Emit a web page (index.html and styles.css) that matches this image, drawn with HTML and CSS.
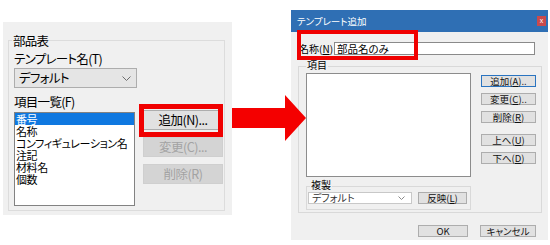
FILE: index.html
```html
<!DOCTYPE html>
<html>

<head>
    <meta name="viewport" content="width=device-width, initial-scale=1" />
    <link rel="stylesheet" href="styles.css">
</head>

<body>
    <div class="scene">
        <section class="panel">
            <div class="group">
                <span class="group-title">部品表</span>
                <div class="field-label">テンプレート名(T)</div>
                <div class="combo">
                    <span>デフォルト</span>
                    <svg class="chev" width="9" height="5" viewBox="0 0 9 5"><polyline points="0.5,0.5 4.5,4.5 8.5,0.5" fill="none" stroke="#6d6d6d" stroke-width="1"/></svg>
                </div>
                <div class="field-label list-label">項目一覧(F)</div>
                <div class="list-row">
                    <ul class="list">
                        <li class="selected">番号</li>
                        <li>名称</li>
                        <li>コンフィギュレーション名</li>
                        <li>注記</li>
                        <li>材料名</li>
                        <li>個数</li>
                    </ul>
                    <div class="btn-col">
                        <button class="btn">追加(N)...</button>
                        <button class="btn" disabled>変更(C)...</button>
                        <button class="btn" disabled>削除(R)</button>
                        <span class="mark mark-add"></span>
                    </div>
                </div>
            </div>
        </section>

        <svg class="arrow" width="74" height="48" viewBox="0 0 74 48">
            <polygon points="0,14 53,14 53,1 74,24 53,47 53,34 0,34" fill="#f40000"/>
        </svg>

        <section class="dialog">
            <div class="titlebar">
                <span>テンプレート追加</span>
                <span class="close">x</span>
            </div>
            <div class="name-row">
                <label class="name-label" for="tplname">名称(<u>N</u>)</label>
                <input id="tplname" class="name-input" type="text" value="部品名のみ">
            </div>
            <div class="dgroup">
                <span class="dgroup-title">項目</span>
                <div class="drow">
                    <div class="dlist"></div>
                    <div class="dbtn-col">
                        <button class="dbtn default">追加(<u>A</u>)..</button>
                        <button class="dbtn">変更(<u>C</u>)..</button>
                        <button class="dbtn">削除(<u>R</u>)</button>
                        <button class="dbtn spaced">上へ(<u>U</u>)</button>
                        <button class="dbtn">下へ(<u>D</u>)</button>
                    </div>
                </div>
                <div class="copy-group">
                    <span class="dgroup-title copy-title">複製</span>
                    <div class="copy-row">
                        <div class="dcombo">
                            <span>デフォルト</span>
                            <svg width="7" height="4" viewBox="0 0 7 4"><polyline points="0.5,0.5 3.5,3.5 6.5,0.5" fill="none" stroke="#8a8a8a" stroke-width="1"/></svg>
                        </div>
                        <button class="dbtn apply">反映(<u>L</u>)</button>
                    </div>
                </div>
            </div>
            <div class="footer">
                <button class="dbtn ok">OK</button>
                <button class="dbtn cancel">キャンセル</button>
            </div>
            <span class="mark mark-name"></span>
        </section>
    </div>
</body>

</html>
```

FILE: styles.css
```css
body {
    margin: 0;
    width: 550px;
    height: 245px;
    overflow: hidden;
    background-color: #fff;
    font-family: "Noto Sans CJK JP", "Noto Sans", sans-serif;
    font-feature-settings: "palt";
    color: #000;
}

.scene {
    display: flex;
    align-items: flex-start;
}

/* left: the property panel */
.panel {
    margin: 22px 0 0 3px;
    width: 229px;
    height: 193px;
    box-sizing: border-box;
    padding: 18px 7px 0 5px;
    background-color: #f0f0f0;
    font-size: 12.5px;
    letter-spacing: -0.7px;
}

.group {
    height: 171px;
    box-sizing: border-box;
    border: 1px solid #dcdcdc;
    padding-left: 5px;
}

.group-title {
    display: block;
    width: max-content;
    margin: -7px 0 0 -2px;
    padding: 0 1px;
    line-height: 14px;
    background-color: #f0f0f0;
}

.field-label {
    margin-top: 3px;
    line-height: 16px;
}

.combo {
    margin-top: 1px;
    width: 123px;
    height: 20px;
    box-sizing: border-box;
    border: 1px solid #adadad;
    background-color: #e5e5e5;
    display: flex;
    align-items: center;
    justify-content: space-between;
    padding: 0 5px 0 4px;
    line-height: 18px;
}

.list-label {
    margin-top: 6px;
}

.list-row {
    margin-top: -6px;
    display: flex;
    align-items: flex-start;
}

.list {
    margin: 8px 0 0;
    padding: 0;
    list-style: none;
    width: 121px;
    height: 94px;
    box-sizing: border-box;
    border: 1px solid #828282;
    background-color: #fff;
    font-size: 11px;
    line-height: 12px;
    letter-spacing: -0.4px;
}

.list li {
    height: 12px;
    padding-left: 1px;
    white-space: nowrap;
}

.list .selected {
    background-color: #0f78e0;
    color: #fff;
}

.btn-col {
    position: relative;
    margin: 6px 0 0 8px;
    display: flex;
    flex-direction: column;
    gap: 7px;
}

.btn {
    width: 80px;
    height: 20px;
    padding: 0;
    border: 1px solid #adadad;
    background-color: #e1e1e1;
    font-family: inherit;
    font-feature-settings: "palt";
    font-size: 12.5px;
    letter-spacing: -0.5px;
    line-height: 18px;
    color: #000;
}

.btn:disabled {
    border-color: #cfcfcf;
    background-color: #d4d4d4;
    color: #a3a3a3;
}

/* red annotation frames drawn over the screenshot */
.mark {
    position: absolute;
    box-sizing: border-box;
    border: 5px solid #f00000;
}

.mark-add {
    left: -4px;
    top: -6px;
    width: 84px;
    height: 33px;
}

.mark-name {
    left: 6px;
    top: 20px;
    width: 121px;
    height: 30px;
    border-width: 4px;
}

.arrow {
    position: relative;
    z-index: 1;
    margin-top: 94px;
    flex: none;
}

/* right: the dialog */
.dialog {
    position: relative;
    margin: 10px 0 0 -15px;
    width: 257px;
    height: 230px;
    background-color: #f0f0f0;
    font-size: 10px;
}

.titlebar {
    height: 22px;
    background-color: #2f6fb4;
    color: #fff;
    display: flex;
    align-items: center;
    justify-content: space-between;
    padding: 0 2px 0 6px;
    font-size: 9.5px;
}

.close {
    width: 9px;
    height: 10px;
    background-color: #c94a4c;
    font-size: 7px;
    line-height: 9px;
    text-align: center;
}

.name-row {
    margin: 10px 0 0 8px;
    display: flex;
    align-items: center;
}

.name-label {
    width: 35px;
    line-height: 13px;
}

.name-input {
    width: 201px;
    height: 13px;
    box-sizing: border-box;
    margin: 0;
    padding: 0 2px;
    border: 1px solid #8a8a8a;
    background-color: #fff;
    font-family: inherit;
    font-feature-settings: "palt";
    font-size: 10.5px;
    line-height: 11px;
    color: #000;
}

.dgroup {
    margin: 11px 0 0 7px;
    width: 244px;
    height: 147px;
    box-sizing: border-box;
    border: 1px solid #d9d9d9;
    padding-left: 7px;
}

.dgroup-title {
    display: block;
    width: max-content;
    margin-top: -7px;
    padding: 0 1px;
    line-height: 10px;
    background-color: #f0f0f0;
}

.drow {
    margin-top: 3px;
    display: flex;
    align-items: flex-start;
}

.dlist {
    width: 165px;
    height: 104px;
    box-sizing: border-box;
    border: 1px solid #8c8c8c;
    background-color: #fff;
}

.dbtn-col {
    margin: 2px 0 0 10px;
    display: flex;
    flex-direction: column;
    gap: 6px;
}

.dbtn {
    width: 55px;
    height: 12px;
    padding: 0;
    border: 1px solid #adadad;
    background-color: #e1e1e1;
    font-family: inherit;
    font-feature-settings: "palt";
    font-size: 9.5px;
    line-height: 10px;
    color: #111;
}

.dbtn.default {
    border-color: #2a74c0;
}

.dbtn.spaced {
    margin-top: 5px;
}

.copy-group {
    margin-top: 9px;
    width: 165px;
    height: 24px;
    box-sizing: border-box;
    border: 1px solid #d9d9d9;
}

.copy-title {
    margin-left: 3px;
}

.copy-row {
    margin: 2px 0 0 1px;
    display: flex;
    gap: 6px;
}

.dcombo {
    width: 104px;
    height: 12px;
    box-sizing: border-box;
    border: 1px solid #c8c8c8;
    background-color: #fff;
    display: flex;
    align-items: center;
    justify-content: space-between;
    padding: 0 6px 0 3px;
    color: #333;
    line-height: 10px;
}

.dbtn.apply {
    width: 49px;
}

.footer {
    margin-top: 12px;
    padding-right: 12px;
    display: flex;
    justify-content: flex-end;
    gap: 12px;
}

.dbtn.ok {
    width: 50px;
}

.dbtn.cancel {
    width: 56px;
}
```
